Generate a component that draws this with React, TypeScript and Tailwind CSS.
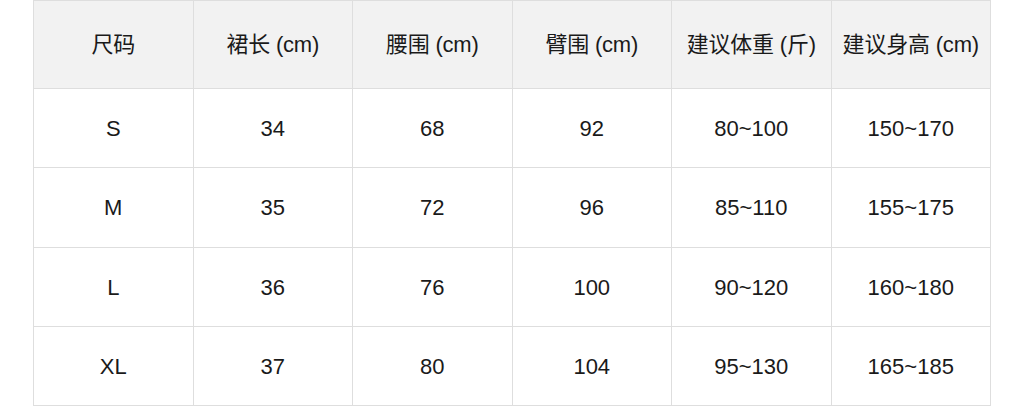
import React from 'react';

const headers = ['尺码', '裙长 (cm)', '腰围 (cm)', '臂围 (cm)', '建议体重 (斤)', '建议身高 (cm)'];

const rows: { cells: string[]; height: string }[] = [
  { cells: ['S', '34', '68', '92', '80~100', '150~170'], height: 'h-[79px]' },
  { cells: ['M', '35', '72', '96', '85~110', '155~175'], height: 'h-[80px]' },
  { cells: ['L', '36', '76', '100', '90~120', '160~180'], height: 'h-[79px]' },
  { cells: ['XL', '37', '80', '104', '95~130', '165~185'], height: 'h-[79px]' },
];

const App: React.FC = () => {
  return (
    <div
      className="w-[1024px] h-[406px] bg-white text-[#1a1a1a]"
      style={{ fontFamily: '"Liberation Sans", "Noto Sans CJK SC", sans-serif' }}
    >
      <div className="ml-[33px] w-[958px] border-t border-l border-[#dedede]">
        <div className="grid grid-cols-6 bg-[#f2f2f2]">
          {headers.map((h) => (
            <div
              key={h}
              className="h-[88px] flex items-center justify-center border-r border-b border-[#dedede] text-[22px] tracking-[-0.2px]"
            >
              {h}
            </div>
          ))}
        </div>
        {rows.map((row) => (
          <div key={row.cells[0]} className="grid grid-cols-6 bg-white">
            {row.cells.map((c, i) => (
              <div
                key={i}
                className={`${row.height} flex items-center justify-center border-r border-b border-[#dedede] text-[22px]`}
              >
                {c}
              </div>
            ))}
          </div>
        ))}
      </div>
    </div>
  );
};

export default App;
